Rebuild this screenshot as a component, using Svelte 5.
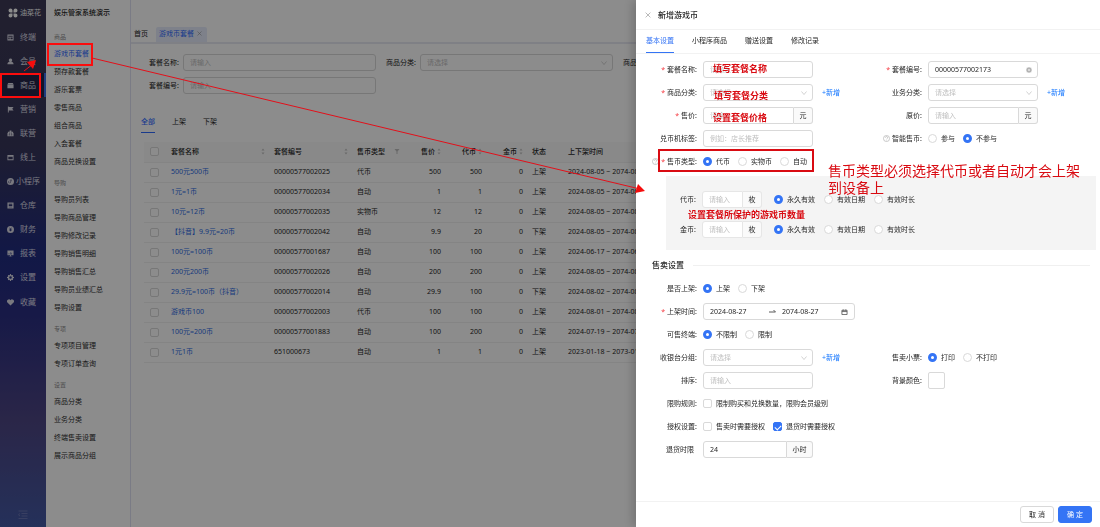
<script>
	const menu = [
		{ name: '终端', icon: 'M1 1h14v14H1zM3 4v2h10V4zM3 8v4h3V8zM8 8v4h5V8z' },
		{ name: '会员', icon: 'M8 1a4 4 0 0 1 2 7.400c3 .6 5 2.600 5 5.600H1c0-3 2-5 5-5.600A4 4 0 0 1 8 1z' },
		{ name: '商品', icon: 'M3 2h10l2 3v1H1V5zM1 7h14v7H1z', active: true },
		{ name: '营销', icon: 'M2 1h2v1h11l-3 4 3 4H4v5H2z' },
		{ name: '联营', icon: 'M6 1h4v3h4v3h1v7H1V7h1V4h4zM5 6v2h2V6zM9 6v2h2V6zM4 10v2h3v-2zM9 10v2h3v-2z' },
		{ name: '线上', icon: 'M1 2h14v12H1zM3 6v6h10V6z' },
		{ name: '小程序', icon: 'M8 0a8 8 0 1 1 0 16A8 8 0 0 1 8 0zM8 4v5a2 2 0 1 1-2-2V6a3 3 0 1 0 3 3V6a1 1 0 1 1 1 1v1a2 2 0 1 0-2-4z' },
		{ name: '仓库', icon: 'M1 1h14v14H1zM4 4v2h8V4zM4 7v2h8V7zM4 11v1h8v-1z' },
		{ name: '财务', icon: 'M8 0a8 8 0 1 1 0 16A8 8 0 0 1 8 0zM5 4l2 3H5v1h2v1H5v1h2v2h2v-2h2V9H9V8h2V7H9l2-3H9.500L8 6.500 6.500 4z' },
		{ name: '报表', icon: 'M1 1h14v11H9v2h3v1H4v-1h3v-2H1zM4 7v3h1V7zM7 5v5h1V5zM10 6v4h1V6z' },
		{ name: '设置', icon: 'M7 0h2l.5 2 1.500.7L13 2l1 1.500L13.300 5l.7 1.500 2 .5v2l-2 .5-.7 1.500.7 2-1.500 1-1.500-.7-1.500.7-.5 2H7l-.5-2L5 13.300 3 14l-1-1.500.7-1.500L2 9.500 0 9V7l2-.5L2.700 5 2 3l1.500-1L5 2.700 6.500 2zM8 5a3 3 0 1 0 0 6 3 3 0 0 0 0-6z' },
		{ name: '收藏', icon: 'M8 15L1 8a4 4 0 0 1 7-5.300A4 4 0 0 1 15 8z', last: true }
	]

	const groups = [
		{ name: '商品', items: ['游戏币套餐', '预存款套餐', '游乐套票', '零售商品', '组合商品', '入会套餐', '商品兑换设置'] },
		{ name: '导购', items: ['导购员列表', '导购商品管理', '导购修改记录', '导购销售明细', '导购销售汇总', '导购员业绩汇总', '导购设置'] },
		{ name: '专项', items: ['专项项目管理', '专项订单查询'] },
		{ name: '设置', items: ['商品分类', '业务分类', '终端售卖设置', '展示商品分组'] }
	]

	const rows = [
		['500元500币', '00000577002025', '代币', '500', '500', '上架', '2024-08-05 ~ 2074-08-05'],
		['1元=1币', '00000577002034', '自动', '1', '1', '上架', '2024-08-05 ~ 2074-08-05'],
		['10元=12币', '00000577002035', '实物币', '12', '12', '上架', '2024-08-05 ~ 2074-08-05'],
		['【抖音】9.9元=20币', '00000577002042', '自动', '9.9', '20', '下架', '2024-08-05 ~ 2074-08-05'],
		['100元=100币', '00000577001687', '自动', '100', '100', '上架', '2024-06-17 ~ 2074-06-17'],
		['200元200币', '00000577002026', '自动', '200', '200', '上架', '2024-08-05 ~ 2074-08-05'],
		['29.9元=100币（抖音）', '00000577002014', '自动', '29.9', '100', '下架', '2024-08-02 ~ 2074-08-02'],
		['游戏币100', '00000577002003', '代币', '100', '100', '上架', '2024-08-01 ~ 2074-08-01'],
		['100元=200币', '00000577001883', '自动', '100', '200', '上架', '2024-07-19 ~ 2074-07-19'],
		['1元1币', '651000673', '自动', '1', '1', '上架', '2023-01-18 ~ 2073-01-18']
	]

	const columns = [
		{ name: '套餐名称', cls: 'name', sort: true },
		{ name: '套餐编号', cls: 'code', sort: true },
		{ name: '售币类型', cls: 'type', filter: true },
		{ name: '售价', cls: 'num', sort: true },
		{ name: '代币', cls: 'num', sort: true },
		{ name: '金币', cls: 'num', sort: true },
		{ name: '状态', cls: 'state' },
		{ name: '上下架时间', cls: 'time' }
	]

	const notes = [
		{ x: 713, y: 72, text: '填写套餐名称' },
		{ x: 714, y: 99, text: '填写套餐分类' },
		{ x: 713, y: 121, text: '设置套餐价格' },
		{ x: 688, y: 218, text: '设置套餐所保护的游戏币数量' }
	]
	const expiry = ['永久有效', '有效日期', '有效时长']
</script>

{#snippet arrow()}
	<svg class="arrow" viewBox="0 0 12 12"><path d="M1 3l5 6 5-6" /></svg>
{/snippet}

{#snippet select(id)}
	<span class="select">
		<select {id}><option>请选择</option></select>
		{@render arrow()}
	</span>
{/snippet}

{#snippet help()}
	<svg class="help" viewBox="0 0 16 16"><circle cx="8" cy="8" r="7" /><path d="M5.500 6a2.500 2.500 0 1 1 3.500 2.300Q8 9 8 10M8 11.500v1" /></svg>
{/snippet}

{#snippet radios(name, options, picked)}
	<div class="options" role="radiogroup" aria-labelledby="l-{name}">
		{#each options as option, i}
			<label><input type="radio" {name} value={option} checked={i === picked} />{option}</label>
		{/each}
	</div>
{/snippet}

<div class="app">
	<aside class="sidebar">
		<div class="logo">
			<svg viewBox="0 0 20 20"><path d="M9 9H5a4 4 0 1 1 4-4zM11 9V5a4 4 0 1 1 4 4zM9 11v4a4 4 0 1 1-4-4zM11 11h4a4 4 0 1 1-4 4z" /></svg>
			<b>油菜花</b>
		</div>
		<nav>
			{#each menu as m}
				<a href="#{m.name}" class:active={m.active} class:last={m.last}>
					<svg viewBox="0 0 16 16"><path d={m.icon} fill-rule="evenodd" /></svg>
					<span>{m.name}</span>
				</a>
			{/each}
		</nav>
		<button class="fold" aria-label="折叠">
			<svg viewBox="0 0 20 18"><path d="M1 2h18M7 7h12M7 12h12M1 17h18M4 7L1 9.500 4 12" /></svg>
		</button>
	</aside>

	<aside class="submenu">
		<h1>娱乐管家系统演示</h1>
		{#each groups as g, i}
			<h2>{g.name}</h2>
			<ul>
				{#each g.items as item, j}
					<li><a href="#{item}" class:current={i === 0 && j === 0}>{item}</a></li>
				{/each}
			</ul>
		{/each}
	</aside>

	<main>
		<div class="pages">
			<a href="#home">首页</a>
			<a href="#package" class="open">游戏币套餐 <svg viewBox="0 0 10 10"><path d="M1 1l8 8M9 1L1 9" /></svg></a>
		</div>
		<div class="filters">
			<div class="filter"><label for="q-name">套餐名称:</label><input id="q-name" placeholder="请输入" /></div>
			<div class="filter"><label for="q-cat">商品分类:</label>{@render select('q-cat')}</div>
			<div class="filter"><label for="q-state">商品状态:</label>{@render select('q-state')}</div>
			<div class="filter"><label for="q-code">套餐编号:</label><input id="q-code" placeholder="请输入" /></div>
		</div>
		<div class="states">
			<button class="on">全部</button>
			<button>上架</button>
			<button>下架</button>
		</div>
		<table>
			<thead>
				<tr>
					<th class="check"><input type="checkbox" aria-label="全选" /></th>
					{#each columns as c}
						<th class={c.cls}>
							<div>
								{c.name}
								{#if c.sort}
									<svg viewBox="0 0 8 14"><path d="M4 1l3 4H1zM4 13L1 9h6z" /></svg>
								{:else if c.filter}
									<svg class="funnel" viewBox="0 0 12 12"><path d="M1 1h10L7 6v5H5V6z" /></svg>
								{/if}
							</div>
						</th>
					{/each}
				</tr>
			</thead>
			<tbody>
				{#each rows as [name, code, type, price, coin, state, time]}
					<tr>
						<td class="check"><input type="checkbox" aria-label={name} /></td>
						<td><a href="#{code}">{name}</a></td>
						<td>{code}</td>
						<td>{type}</td>
						<td class="num">{price}</td>
						<td class="num">{coin}</td>
						<td class="num">0</td>
						<td class="state">{state}</td>
						<td>{time}</td>
					</tr>
				{/each}
			</tbody>
		</table>
	</main>
</div>

<div class="mask"></div>

<section class="drawer">
	<header>
		<button class="close" aria-label="关闭"><svg viewBox="0 0 10 10"><path d="M1 1l8 8M9 1L1 9" /></svg></button>
		<h2>新增游戏币</h2>
	</header>
	<div class="tabs">
		<button class="on">基本设置</button>
		<button>小程序商品</button>
		<button>赠送设置</button>
		<button>修改记录</button>
	</div>

	<form>
		<div class="grid">
			<div class="row">
				<label class="label" for="name"><i>*</i> 套餐名称:</label>
				<input id="name" class="ctl" placeholder="请输入" />
			</div>
			<div class="row">
				<label class="label" for="code"><i>*</i> 套餐编号:</label>
				<span class="ctl clearable">
					<input id="code" value="00000577002173" />
					<svg viewBox="0 0 12 12"><circle cx="6" cy="6" r="6" /><path d="M4 4l4 4M8 4L4 8" /></svg>
				</span>
			</div>
			<div class="row">
				<label class="label" for="cat"><i>*</i> 商品分类:</label>
				<div class="ctl">{@render select('cat')}</div>
				<a href="#add-cat">+新增</a>
			</div>
			<div class="row">
				<label class="label" for="biz">业务分类:</label>
				<div class="ctl">{@render select('biz')}</div>
				<a href="#add-biz">+新增</a>
			</div>
			<div class="row">
				<label class="label" for="price"><i>*</i> 售价:</label>
				<div class="ctl addon"><input id="price" placeholder="请输入" /><span>元</span></div>
			</div>
			<div class="row">
				<label class="label" for="origin">原价:</label>
				<div class="ctl addon"><input id="origin" placeholder="请输入" /><span>元</span></div>
			</div>
			<div class="row">
				<label class="label" for="tag">兑币机标签:</label>
				<input id="tag" class="ctl" placeholder="例如：店长推荐" />
			</div>
			<div class="row">
				<span class="label" id="l-smart">{@render help()} 智能售币:</span>
				{@render radios('smart', ['参与', '不参与'], 1)}
			</div>
			<div class="row">
				<span class="label" id="l-kind">{@render help()}<i>*</i> 售币类型:</span>
				{@render radios('kind', ['代币', '实物币', '自动'], 0)}
			</div>
		</div>

		<div class="panel">
			<div class="row">
				<label class="label" for="coin" id="l-coin-exp">代币:</label>
				<div class="addon"><input id="coin" placeholder="请输入" /><span>枚</span></div>
				{@render radios('coin-exp', expiry, 0)}
			</div>
			<div class="row">
				<label class="label" for="gold" id="l-gold-exp">金币:</label>
				<div class="addon"><input id="gold" placeholder="请输入" /><span>枚</span></div>
				{@render radios('gold-exp', expiry, 0)}
			</div>
		</div>

		<h3>售卖设置</h3>

		<div class="grid">
			<div class="row wide">
				<span class="label" id="l-sale">是否上架:</span>
				{@render radios('sale', ['上架', '下架'], 0)}
			</div>
			<div class="row wide">
				<label class="label" for="from"><i>*</i> 上架时间:</label>
				<div class="range">
					<input id="from" value="2024-08-27" />
					<svg viewBox="0 0 14 12"><path d="M0 6h13M9 2l4 4" /></svg>
					<input aria-label="下架时间" value="2074-08-27" />
					<svg viewBox="0 0 14 14"><path d="M1 3h12v10H1zM1 6h12M4 1v3M10 1v3" /></svg>
				</div>
			</div>
			<div class="row wide">
				<span class="label" id="l-term">可售终端:</span>
				{@render radios('term', ['不限制', '限制'], 0)}
			</div>
			<div class="row">
				<label class="label" for="desk">收银台分组:</label>
				<div class="ctl">{@render select('desk')}</div>
				<a href="#add-desk">+新增</a>
			</div>
			<div class="row">
				<span class="label" id="l-ticket">售卖小票:</span>
				{@render radios('ticket', ['打印', '不打印'], 0)}
			</div>
			<div class="row">
				<label class="label" for="order">排序:</label>
				<input id="order" class="ctl" placeholder="请输入" />
			</div>
			<div class="row">
				<label class="label" for="color">背景颜色:</label>
				<button type="button" id="color" class="swatch" aria-label="背景颜色"></button>
			</div>
			<div class="row wide">
				<span class="label">限购规则:</span>
				<div class="options">
					<label><input type="checkbox" />限制购买和兑换数量，限购会员级别</label>
				</div>
			</div>
			<div class="row wide">
				<span class="label">授权设置:</span>
				<div class="options">
					<label><input type="checkbox" />售卖时需要授权</label>
					<label><input type="checkbox" checked />退货时需要授权</label>
				</div>
			</div>
			<div class="row wide">
				<label class="label bare" for="refund">退货时限</label>
				<div class="ctl addon hours"><input id="refund" value="24" /><span>小时</span></div>
			</div>
		</div>
	</form>

	<footer>
		<button>取 消</button>
		<button class="primary">确 定</button>
	</footer>
</section>

<svg class="notes" width="1100" height="527">
	<g class="bright">
		<rect x="48" y="44" width="44" height="21" />
		<rect x="1" y="74" width="39" height="23" />
		<path class="thin" d="M24 71l9-7M92 58l548 131" />
		<path class="head" d="M36 60l-3 9-6-7zM645 191l-10 2 3-9z" />
	</g>
	<rect x="659" y="150" width="154" height="21" />
	{#each notes as n}
		<text x={n.x} y={n.y}>{n.text}</text>
	{/each}
	<text class="big" x="828" y="176">售币类型必须选择代币或者自动才会上架</text>
	<text class="big" x="828" y="193">到设备上</text>
</svg>

<style>
	:global(body) {
		font-family: 'Noto Sans', 'Noto Sans CJK SC', sans-serif;
		font-size: 7px;
		line-height: 10px;
		color: #262626;
		background: #fff;
	}
	* {
		box-sizing: border-box;
	}
	button,
	input,
	select {
		font: inherit;
		color: inherit;
		margin: 0;
		padding: 0;
		border: none;
		background: none;
		outline: none;
	}
	a {
		color: #1677ff;
		text-decoration: none;
		white-space: nowrap;
	}
	h1,
	h2,
	h3,
	ul {
		margin: 0;
		padding: 0;
		font-size: 7px;
	}
	svg {
		flex: none;
	}
	.app {
		display: flex;
		min-height: 100vh;
		overflow: hidden;
	}

	/* left menu */
	.sidebar {
		display: flex;
		flex-direction: column;
		flex: none;
		width: 46px;
		color: #fff;
		background: linear-gradient(#3d3a56, #37365a 28%, #212c80 48%, #2b2f82 60%, #4e4684 80%, #4359a4);
	}
	.logo {
		display: flex;
		align-items: center;
		gap: 2px;
		height: 25px;
		padding-left: 8px;
	}
	.logo b {
		font-weight: 400;
	}
	.logo svg {
		width: 10px;
		height: 10px;
		fill: #fff;
	}
	.sidebar nav a {
		display: flex;
		align-items: center;
		height: 24px;
		padding-left: 7px;
		font-size: 8px;
		color: #dcdce8;
	}
	.sidebar nav span {
		flex: 1;
		text-align: center;
		padding-right: 4px;
	}
	.sidebar nav svg {
		width: 7px;
		height: 7px;
		fill: #dcdce8;
	}
	.sidebar nav .active {
		background: #26264a;
		box-shadow: inset -2px 0 #3a6ee8;
	}
	.sidebar nav .last {
		margin-top: 1px;
	}
	.fold {
		margin: auto auto 8px;
		height: 10px;
	}
	.fold svg {
		display: block;
		width: 10px;
		height: 9px;
		fill: none;
		stroke: #8c93c4;
		stroke-width: 1;
	}

	.submenu {
		flex: none;
		width: 85px;
		padding-left: 8px;
		border-right: 1px solid #dfe0f2;
	}
	.submenu h1 {
		height: 29px;
		line-height: 26px;
		font-weight: 500;
	}
	.submenu h2 {
		margin-top: 4px;
		line-height: 16px;
		height: 16px;
		font-size: 6px;
		font-weight: 400;
		color: #8c8c8c;
	}
	.submenu h1 + h2 {
		margin-top: 0;
	}
	.submenu ul {
		list-style: none;
	}
	.submenu li {
		line-height: 18px;
		height: 18px;
	}
	.submenu a {
		color: #303030;
	}
	.submenu a.current {
		color: #2f6bff;
	}

	main {
		flex: 1;
		min-width: 0;
	}
	.pages {
		display: flex;
		gap: 8px;
		height: 44px;
		padding: 27px 3px 0;
		border-bottom: 2px solid #e8e9f3;
	}
	.pages a {
		line-height: 14px;
		color: #262626;
	}
	.pages .open {
		padding: 0 5px 0 3px;
		border-radius: 2px 2px 0 0;
		background: #e6ecfb;
		color: #2f6bff;
	}
	.pages svg {
		width: 5px;
		height: 5px;
		margin-left: 1px;
		stroke: #808080;
	}
	.filters {
		display: grid;
		grid-template-columns: repeat(3, 227px);
		gap: 6px 10px;
		padding: 10px 18px 0;
	}
	.filter {
		display: grid;
		grid-template-columns: 32px 1fr;
		gap: 2px;
		align-items: center;
	}
	.filter:nth-child(4) {
		grid-row: 2;
	}
	.filter label {
		white-space: nowrap;
	}
	input:not([type='radio'], [type='checkbox']),
	select {
		width: 100%;
		height: 17px;
		padding: 0 6px;
		border: 1px solid #d9d9d9;
		border-radius: 3px;
	}
	::placeholder {
		color: #bfbfbf;
		opacity: 1;
	}
	.select {
		display: flex;
		align-items: center;
		width: 100%;
	}
	select {
		appearance: none;
		color: #bfbfbf;
	}
	.arrow {
		width: 6px;
		height: 6px;
		margin-left: -12px;
		margin-right: 6px;
		fill: none;
		stroke: #a6a6a6;
	}
	.states {
		display: flex;
		gap: 17px;
		padding: 19px 10px 0;
	}
	.states button {
		height: 20px;
		padding-bottom: 2px;
		border-bottom: 1px solid transparent;
	}
	.states .on {
		font-weight: 500;
		color: #2f6bff;
		border-color: #2f6bff;
	}

	table {
		width: calc(100% - 23px);
		margin: 9px 10px 0 13px;
		table-layout: fixed;
		border-collapse: collapse;
		text-align: left;
	}
	th,
	td {
		height: 20px;
		padding: 0;
		border-bottom: 1px solid #f0f0f0;
		white-space: nowrap;
	}
	th {
		font-weight: 500;
		background: #fafafa;
	}
	th div {
		display: flex;
		align-items: center;
		justify-content: space-between;
		padding-right: 9px;
	}
	th svg {
		width: 4px;
		height: 7px;
		fill: #bfbfbf;
	}
	th .funnel {
		width: 6px;
	}
	th.check {
		width: 27px;
	}
	.check {
		padding-left: 6px;
	}
	th.name {
		width: 103px;
	}
	th.code {
		width: 83px;
	}
	th.type {
		width: 52px;
	}
	th.num {
		width: 41px;
	}
	td.num {
		text-align: right;
		padding-right: 9px;
	}
	th.num div {
		justify-content: flex-end;
		gap: 2px;
	}
	th.state {
		width: 36px;
	}
	td a {
		color: #2b6be4;
	}

	input[type='radio'],
	input[type='checkbox'] {
		appearance: none;
		display: block;
		flex: none;
		width: 9px;
		height: 9px;
		border: 1px solid #d9d9d9;
		border-radius: 2px;
		background: #fff;
	}
	input[type='radio'] {
		border-radius: 50%;
	}
	input[type='radio']:checked {
		border: 3px solid #3474f5;
	}
	input[type='checkbox']:checked {
		display: grid;
		place-items: center;
		border-color: #3474f5;
		background: #3474f5;
	}
	input[type='checkbox']:checked::after {
		content: '';
		width: 3px;
		height: 5px;
		border: solid #fff;
		border-width: 0 1px 1px 0;
		transform: rotate(45deg);
	}

	.mask {
		position: fixed;
		inset: 0;
		background: rgba(0, 0, 0, 0.45);
	}

	/* drawer */
	.drawer {
		position: fixed;
		top: 0;
		right: 0;
		bottom: 0;
		display: flex;
		flex-direction: column;
		width: 464px;
		background: #fff;
		box-shadow: -3px 0 10px rgba(0, 0, 0, 0.2);
	}
	header {
		display: flex;
		align-items: center;
		gap: 7px;
		height: 30px;
		padding: 0 9px;
		border-bottom: 1px solid #f2f2f2;
	}
	header h2 {
		font-size: 8px;
		font-weight: 500;
	}
	.close svg {
		display: block;
		width: 6px;
		height: 6px;
		stroke: #8c8c8c;
	}
	.tabs {
		display: flex;
		gap: 18px;
		padding: 0 10px;
		border-bottom: 1px solid #f2f2f2;
	}
	.tabs button {
		height: 23px;
		border-bottom: 1px solid transparent;
	}
	.tabs .on {
		color: #3474f5;
		border-color: #3474f5;
	}
	form {
		flex: 1;
		padding: 7px 4px 0 10px;
	}
	.grid {
		display: grid;
		grid-template-columns: 1fr 1fr;
		gap: 6px 0;
	}
	.row {
		display: flex;
		align-items: center;
		gap: 6px;
		height: 17px;
	}
	.wide {
		grid-column: 1 / -1;
	}
	.label {
		display: flex;
		align-items: center;
		justify-content: flex-end;
		gap: 2px;
		flex: none;
		width: 51px;
		white-space: nowrap;
	}
	.bare {
		padding-right: 3px;
	}
	.label i {
		font-style: normal;
		color: #f5333a;
	}
	.help {
		width: 7px;
		height: 7px;
		fill: none;
		stroke: #8c8c8c;
	}
	.ctl,
	input.ctl:not([type='radio'], [type='checkbox']) {
		flex: none;
		width: 110px;
	}
	.row > a {
		margin-left: 3px;
	}
	.clearable {
		display: flex;
		align-items: center;
	}
	.clearable svg {
		width: 6px;
		height: 6px;
		margin-left: -12px;
		fill: #b3b3b3;
		stroke: #fff;
	}
	.addon {
		display: grid;
		grid-template-columns: 1fr 19px;
	}
	.hours {
		grid-template-columns: 1fr 26px;
	}
	.addon input:not([type='radio'], [type='checkbox']) {
		border-radius: 3px 0 0 3px;
		background: #fff;
	}
	.addon span {
		line-height: 15px;
		text-align: center;
		border: 1px solid #d9d9d9;
		border-left: none;
		border-radius: 0 3px 3px 0;
		background: #fafafa;
	}
	.options {
		display: flex;
		gap: 8px;
	}
	.options label {
		display: flex;
		align-items: center;
		gap: 4px;
		white-space: nowrap;
	}
	.panel {
		display: grid;
		gap: 13px;
		margin: 6px 0 0 20px;
		padding: 15px 0 12px;
		background: #f4f4f4;
	}
	.panel .label {
		width: 30px;
	}
	.panel .addon {
		width: 60px;
		margin-right: 6px;
	}
	.panel .options {
		gap: 9px;
	}
	.panel input:not([type='radio'], [type='checkbox']),
	.panel .addon span {
		border-color: #e6e6e6;
	}
	h3 {
		display: flex;
		align-items: center;
		gap: 9px;
		height: 30px;
		padding: 0 6px;
		font-size: 8px;
		font-weight: 500;
	}
	h3::after {
		content: '';
		flex: 1;
		border-top: 1px solid #f0f0f0;
	}
	.range {
		display: flex;
		align-items: center;
		width: 152px;
		height: 17px;
		padding-right: 6px;
		border: 1px solid #d9d9d9;
		border-radius: 3px;
	}
	.range input:not([type='radio'], [type='checkbox']) {
		flex: 1;
		min-width: 0;
		height: 15px;
		border: none;
	}
	.range svg {
		width: 7px;
		height: 6px;
		fill: none;
		stroke: #595959;
		stroke-width: 2;
	}
	.swatch {
		width: 17px;
		height: 17px;
		border: 1px solid #d9d9d9;
		border-radius: 2px;
	}
	footer {
		display: flex;
		justify-content: flex-end;
		gap: 4px;
		padding: 4px 8px;
		border-top: 1px solid #f2f2f2;
	}
	footer button {
		width: 34px;
		height: 17px;
		border: 1px solid #d9d9d9;
		border-radius: 3px;
	}
	footer .primary {
		color: #fff;
		border-color: #3474f5;
		background: #3474f5;
	}

	/* red call-outs */
	.notes {
		position: absolute;
		top: 0;
		left: 0;
		pointer-events: none;
	}
	.notes rect,
	.thin {
		fill: none;
		stroke: #d90b12;
		stroke-width: 2;
	}
	.notes .bright rect {
		stroke: #fb0d0d;
	}
	.notes .thin {
		stroke: #e3101a;
		stroke-width: 1;
	}
	.head {
		fill: #f50d0d;
	}
	.notes text {
		font-family: 'Liberation Serif', 'Noto Sans CJK SC', serif;
		font-size: 9px;
		font-weight: 700;
		fill: #d90b12;
	}
	.notes .big {
		font-size: 14px;
		font-weight: 400;
	}
</style>
